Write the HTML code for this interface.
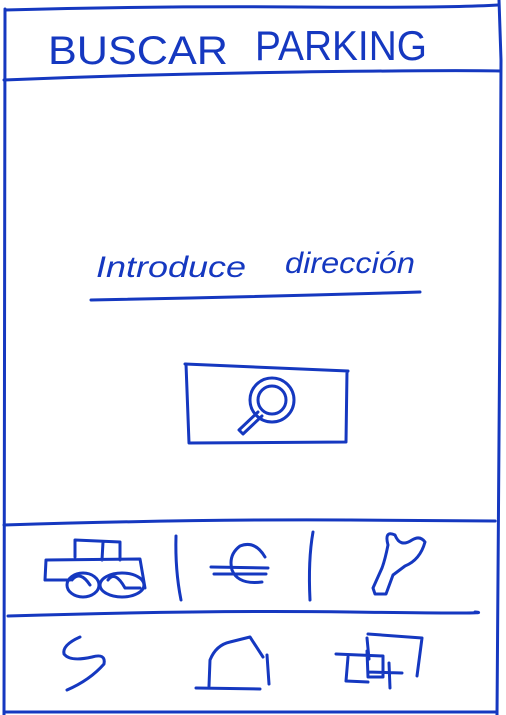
<!DOCTYPE html>
<html><head><meta charset="utf-8"><style>
html,body{margin:0;padding:0;background:#fff;width:506px;height:715px;overflow:hidden}
svg{display:block}
text{font-family:"Liberation Sans",sans-serif;fill:#1538c0;stroke:none}
</style></head><body>
<svg width="506" height="715" viewBox="0 0 506 715" fill="none" stroke="#1538c0" stroke-width="3" stroke-linecap="round" stroke-linejoin="round">
<!-- frame -->
<path d="M5 10 Q150 6 300 7 T498 5"/>
<path d="M5 9 L4 715"/>
<path d="M499 0 L501 60 L500 300 L497 715"/>
<path d="M4 80 Q150 74 300 72 T500 71"/>
<path d="M4 525 Q200 519 350 520 T495 521"/>
<path d="M8 616 Q200 610 350 612 T475 612"/>
<path d="M4 712 L497 712"/>
<!-- title -->
<text x="48" y="64" font-size="40" textLength="180" lengthAdjust="spacingAndGlyphs">BUSCAR</text>
<text x="255" y="60" font-size="42" textLength="172" lengthAdjust="spacingAndGlyphs">PARKING</text>
<!-- input -->
<text x="96" y="277" font-size="30" font-style="italic" textLength="150" lengthAdjust="spacingAndGlyphs" font-family="Liberation Serif">Introduce</text>
<text x="285" y="273" font-size="30" font-style="italic" textLength="130" lengthAdjust="spacingAndGlyphs" font-family="Liberation Serif">dirección</text>
<path d="M91 300 Q250 297 420 292"/>
<!-- search button -->
<path d="M185 364 L348 371 M186 364 L189 443 L346 442 L347 371"/>
<circle cx="272" cy="400" r="22"/>
<circle cx="272" cy="400" r="14"/>
<path d="M258 412 L239 430 L243 434 L262 416"/>
<!-- car -->
<path d="M75 540 L120 542 L120 560 M75 540 L75 557 M103 542 L102 560 M46 560 L140 559 L145 588 M46 560 L45 580 L70 580"/>
<ellipse cx="83" cy="585" rx="16" ry="12"/>
<ellipse cx="122" cy="585" rx="22" ry="12"/>
<path d="M72 580 Q80 570 90 585 M108 580 Q115 570 125 588 L140 588"/>
<!-- dividers -->
<path d="M176 536 Q175 570 181 600"/>
<path d="M313 532 Q308 560 310 600"/>
<!-- euro -->
<path d="M265 557 Q255 540 240 546 Q228 555 232 570 Q238 585 262 582"/>
<path d="M211 567 L268 568 M214 574 L266 574"/>
<!-- wrench -->
<path d="M388 545 Q384 530 395 535 Q400 548 412 540 Q420 535 425 542 Q420 560 405 566 L393 575 L386 594 L375 594 L373 588 L382 568 Q385 560 388 545"/>
<!-- swirl -->
<path d="M80 637 Q62 645 64 654 Q70 662 92 657 Q106 653 104 664 Q90 680 67 690"/>
<!-- house -->
<path d="M196 688 L260 689 M209 686 L210 660 Q216 645 230 642 L250 637 L263 657 M267 655 L269 684"/>
<!-- last icon -->
<path d="M367 638 L369 659 M368 634 L422 638 L417 676 M336 654 L383 656 L383 677 L368 677 L367 651 M348 657 L346 681 L368 682 M368 672 L402 673 M389 663 L390 688"/>
</svg>
</body></html>
